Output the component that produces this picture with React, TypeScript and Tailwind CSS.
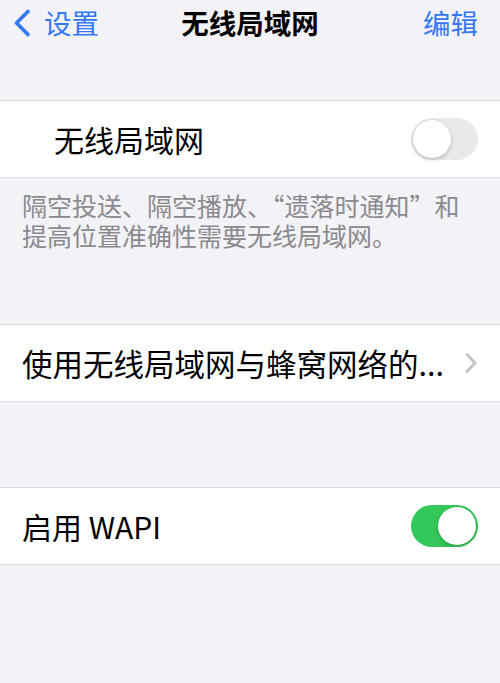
import React from "react";

const font = {
  fontFamily: '"Noto Sans CJK SC", "Noto Sans", sans-serif',
};

function Toggle({ on }: { on: boolean }) {
  return (
    <div
      className={
        "relative h-[42px] w-[67px] rounded-full " +
        (on ? "bg-[#34c759]" : "bg-[#e9e9eb]")
      }
    >
      <div
        className={
          "absolute top-[2px] h-[38px] w-[38px] rounded-full bg-white shadow-[0_2px_4px_rgba(0,0,0,0.18),0_0_0_0.5px_rgba(0,0,0,0.06)] " +
          (on ? "right-[2px]" : "left-[2px]")
        }
      />
    </div>
  );
}

export default function App() {
  return (
    <div
      className="flex h-[683px] w-[500px] flex-col overflow-hidden bg-[#f2f2f7]"
      style={font}
    >
      {/* navigation bar */}
      <div className="h-[100px] shrink-0">
        <div className="flex h-[45px] items-center justify-between px-[12px]">
          <div className="flex w-[120px] items-center gap-[12px] text-[#3478f6]">
            <svg width="20" height="28" viewBox="0 0 20 28" fill="none">
              <path
                d="M16 2.5 L4.5 14 L16 25.5"
                stroke="#3478f6"
                strokeWidth="3.6"
                strokeLinecap="round"
                strokeLinejoin="round"
              />
            </svg>
            <span className="text-[27.5px] leading-none">设置</span>
          </div>
          <span className="text-[27.5px] font-bold leading-none text-black">
            无线局域网
          </span>
          <div className="flex w-[120px] justify-end pr-[10px]">
            <span className="text-[27.5px] leading-none text-[#3478f6]">编辑</span>
          </div>
        </div>
      </div>

      {/* Wi-Fi switch */}
      <div className="flex h-[78px] shrink-0 items-center justify-between border-y border-[#dcdce0] bg-white pl-[54px] pr-[22px]">
        <span className="text-[30px] leading-none text-black">无线局域网</span>
        <Toggle on={false} />
      </div>

      {/* explanation */}
      <div className="flex h-[146px] shrink-0 flex-col pl-[22px] pr-[20px] pt-[12px] text-[25px] leading-[30px] text-[#8a8a8e]">
        <div className="whitespace-nowrap">隔空投送、隔空播放、“遗落时通知”和</div>
        <div className="whitespace-nowrap">提高位置准确性需要无线局域网。</div>
      </div>

      {/* apps using WLAN & cellular */}
      <div className="flex h-[78px] shrink-0 items-center justify-between border-y border-[#dcdce0] bg-white pl-[22px] pr-[22px]">
        <span className="text-[30.5px] leading-none text-black">
          使用无线局域网与蜂窝网络的...
        </span>
        <svg width="14" height="22" viewBox="0 0 14 22" fill="none">
          <path
            d="M3 2.5 L11 11 L3 19.5"
            stroke="#c4c4c7"
            strokeWidth="3"
            strokeLinecap="round"
            strokeLinejoin="round"
          />
        </svg>
      </div>

      <div className="h-[85px] shrink-0" />

      {/* WAPI */}
      <div className="flex h-[78px] shrink-0 items-center justify-between border-y border-[#dcdce0] bg-white pl-[22px] pr-[22px]">
        <span className="text-[30px] leading-none text-black">启用 WAPI</span>
        <Toggle on={true} />
      </div>
    </div>
  );
}
